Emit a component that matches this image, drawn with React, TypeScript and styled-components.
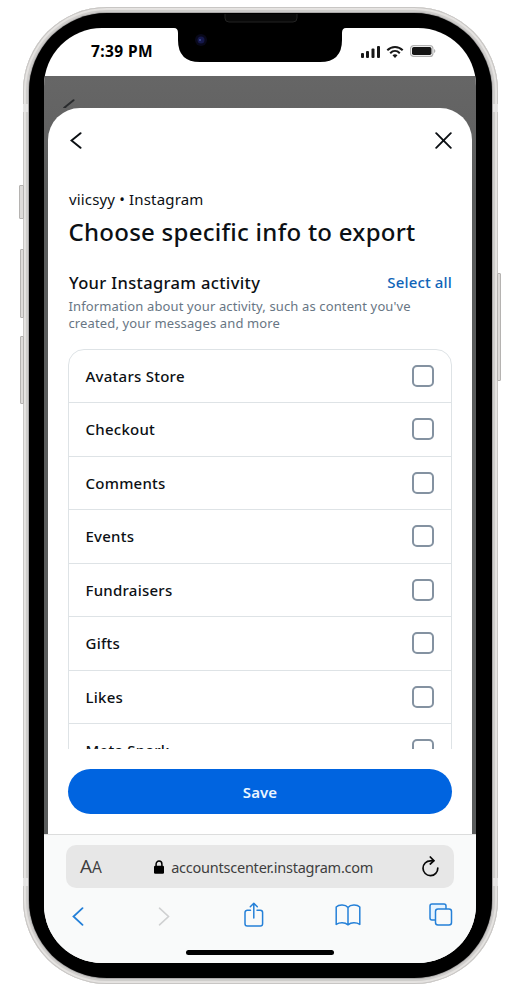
import React from "react";
import styled, { createGlobalStyle } from "styled-components";

const GlobalStyle = createGlobalStyle`
  * { box-sizing: border-box; }
  body { margin: 0; background: #fff; }
  button { border: 0; padding: 0; background: none; font: inherit; }
`;

const Page = styled.div`
  width: 526px;
  height: 995px;
  padding: 7px 0 0 23px;
  overflow: hidden;
  background: #fff;
  font-family: "Noto Sans", "Open Sans", sans-serif;
  color: #0c1014;
`;

const Phone = styled.div`
  position: relative;
  width: 475px;
  height: 977px;
  padding: 6px;
  border-radius: 84px;
  background: #dcdad9;
  box-shadow: inset 0 0 0 1px #c8c6c4, inset 0 0 1px 3px #e6e4e2, inset 0 0 1px 4px #cbc9c7;
`;

const SideButton = styled.i<{ $top: number; $height: number; $side: "left" | "right"; $out: number }>`
  position: absolute;
  top: ${(p) => p.$top}px;
  ${(p) => p.$side}: -${(p) => p.$out}px;
  width: ${(p) => p.$out + 1}px;
  height: ${(p) => p.$height}px;
  border: 1px solid #b5b3b1;
  border-radius: 1px;
  background: #dddbd9;
`;

const AntennaBand = styled.i<{ $top: number; $side: "left" | "right" }>`
  position: absolute;
  top: ${(p) => p.$top}px;
  ${(p) => p.$side}: 0;
  width: 5px;
  height: 8px;
  background: #e6e5e4;
`;

const Bezel = styled.div`
  width: 463px;
  height: 965px;
  padding: 15px;
  border-radius: 78px;
  background: #000;
  box-shadow: 0 0 2px #222;
`;

const Screen = styled.div`
  display: flex;
  flex-direction: column;
  width: 432px;
  height: 935px;
  border-radius: 58px;
  overflow: hidden;
  background: #fff;
`;

const StatusBar = styled.header`
  display: flex;
  justify-content: space-between;
  height: 48px;
  padding: 11px 40px 0 47px;
`;

const Clock = styled.time`
  font-size: 15.5px;
  line-height: 24px;
  font-weight: 700;
  letter-spacing: 0.4px;
  color: #000;
`;

const StatusIcons = styled.div`
  display: flex;
  align-items: center;
  gap: 6px;
  height: 24px;
`;

const Notch = styled.svg`
  position: absolute;
  left: 149px;
  top: 7px;
`;

const Backdrop = styled.main`
  display: flex;
  flex-direction: column;
  height: 758px;
  padding: 0 4px;
  background: linear-gradient(#666 0, #636363 40px, #5a5c5c 120px);
`;

const BackdropHead = styled.div`
  height: 32px;
  padding: 23px 0 0 15px;
  overflow: hidden;
  line-height: 0;
`;

const Sheet = styled.section`
  display: flex;
  flex-direction: column;
  height: 726px;
  padding: 0 20px;
  border-radius: 32px 32px 0 0;
  background: #fff;
`;

const SheetNav = styled.nav`
  display: flex;
  justify-content: space-between;
  align-items: center;
  height: 64px;
  padding-left: 2px;
`;

const IconButton = styled.button`
  display: flex;
`;

const Account = styled.p`
  margin: 17px 0 0 1px;
  font-size: 15px;
  line-height: 20px;
  letter-spacing: 0.16px;
`;

const Title = styled.h1`
  margin: 7px 0 0 0.5px;
  font-size: 24px;
  line-height: 32px;
  font-weight: 500;
  letter-spacing: 0.26px;
  white-space: nowrap;
`;

const SectionHead = styled.div`
  display: flex;
  justify-content: space-between;
  margin-top: 23px;
  height: 24px;
`;

const SectionTitle = styled.h2`
  margin: 0 0 0 1px;
  font-size: 16.5px;
  line-height: 24px;
  font-weight: 500;
  letter-spacing: 0.35px;
`;

const SelectAll = styled.button`
  font-size: 15px;
  line-height: 22px;
  height: 22px;
  font-weight: 500;
  letter-spacing: 0.15px;
  color: #0f64b8;
`;

const Description = styled.p`
  margin: 3px 0 0 0.5px;
  font-size: 13px;
  line-height: 17px;
  letter-spacing: 0.13px;
  color: #687684;
  white-space: nowrap;
`;

const ListViewport = styled.div`
  height: 400.5px;
  margin-top: 16.5px;
  overflow: hidden;
`;

const List = styled.ul`
  margin: 0;
  padding: 0;
  list-style: none;
  border: 1px solid #dee3e6;
  border-radius: 16px;
`;

const Row = styled.li`
  display: flex;
  align-items: center;
  justify-content: space-between;
  height: 53.5px;
  padding: 0 17px 0 16.5px;
  border-bottom: 1px solid #dee3e6;
  font-size: 15px;
  font-weight: 480;
  letter-spacing: 0.25px;
`;

const Checkbox = styled.span`
  width: 22px;
  height: 22px;
  border: 2px solid #8492a1;
  border-radius: 5px;
`;

const SaveButton = styled.button`
  flex: none;
  height: 45px;
  margin-top: 20px;
  border-radius: 23px;
  background: #0064e0;
  color: #e9f5ff;
  font-size: 15px;
  font-weight: 600;
  letter-spacing: 0.1px;
`;

const Browser = styled.footer`
  display: flex;
  flex-direction: column;
  align-items: center;
  height: 129px;
  padding: 10px 22px 0;
  border-top: 1px solid #dcdddd;
  background: #f9fafa;
`;

const AddressBar = styled.div`
  display: flex;
  align-items: center;
  justify-content: space-between;
  width: 388px;
  height: 43px;
  padding: 0 15px 0 14px;
  border-radius: 10px;
  background: #e7e7e7;
  color: #3e3e3e;
`;

const TextSize = styled.span`
  font-family: "Open Sans", "Noto Sans", sans-serif;
  font-size: 19px;
  line-height: 24px;
  small { font-size: 15.5px; }
`;

const Address = styled.span`
  display: flex;
  align-items: center;
  gap: 7.5px;
  padding-left: 3px;
  font-size: 14.5px;
  line-height: 20px;
  letter-spacing: -0.23px;
`;

const Toolbar = styled.div`
  display: grid;
  grid-template-columns: 86px 86px 91px 94px 24px;
  align-items: center;
  width: 388px;
  height: 54px;
  padding-left: 6px;
`;

const HistoryButton = styled.button`
  display: flex;
  padding-top: 3px;
`;

const HomeIndicator = styled.i`
  width: 148px;
  height: 5px;
  margin-top: 8px;
  border-radius: 3px;
  background: #000;
`;

const categories = ["Avatars Store", "Checkout", "Comments", "Events", "Fundraisers", "Gifts", "Likes", "Meta Spark"];

type ChevronProps = { color: string; right?: boolean; w?: number; h?: number; stroke?: number };

const Chevron = ({ color, right, w = 12, h = 18, stroke = 2 }: ChevronProps) => (
  <svg width={w} height={h} fill="none" stroke={color} strokeWidth={stroke} strokeLinecap="round">
    <path d={right ? `M1.5 1.2 ${w - 1.5} ${h / 2} 1.5 ${h - 1.2}` : `M${w - 1.5} 1.2 1.5 ${h / 2} ${w - 1.5} ${h - 1.2}`} />
  </svg>
);

const Signal = () => (
  <svg width="19" height="13" fill="#171717">
    <rect x="0" y="8" width="3" height="5" rx="1" />
    <rect x="5" y="6" width="3" height="7" rx="1" />
    <rect x="10.5" y="3.5" width="3" height="9.5" rx="1" />
    <rect x="16" y="1" width="3" height="12" rx="1" />
  </svg>
);

const Wifi = () => (
  <svg width="18" height="13" fill="none" stroke="#171717" strokeWidth="2">
    <path d="M1.3 5.2C5.7.8 12.3.8 16.7 5.2" />
    <path d="M4.2 8.2C7 5.4 11 5.4 13.8 8.2" />
    <path d="M6.5 10.3Q9 8.2 11.5 10.3L9 12.9Z" fill="#171717" stroke="none" />
  </svg>
);

const Battery = () => (
  <svg width="26" height="12">
    <rect x=".6" y=".6" width="22.3" height="10.8" rx="3" fill="#fff" stroke="#b2b2b2" strokeWidth="1.2" />
    <rect x="2" y="2" width="19.5" height="8" rx="1.8" fill="#151515" />
    <path d="M24 4v4q1.4-.6 1.4-2T24 4Z" fill="#b2b2b2" />
  </svg>
);

const Close = () => (
  <svg width="17" height="17" stroke="#0c1014" strokeWidth="1.9" strokeLinecap="round">
    <path d="m1.2 1.2 14.6 14.6M15.8 1.2 1.2 15.8" />
  </svg>
);

const Lock = () => (
  <svg width="10" height="14">
    <path d="M2.1 7V4a2.9 2.9 0 0 1 5.8 0v3" fill="none" stroke="#000" strokeWidth="1.5" />
    <rect y="5.7" width="10" height="8" rx="1.3" />
  </svg>
);

const Reload = () => (
  <svg width="17" height="21" fill="none" stroke="#080808" strokeWidth="1.7" strokeLinecap="round">
    <path d="M15.8 12A7.4 7.4 0 1 1 8.4 4.8H11.5" />
    <path d="m8.3 1 3.6 3.8-3.6 3.2" />
  </svg>
);

const Share = () => (
  <svg width="20" height="26" fill="none" stroke="#2580d8" strokeWidth="1.5" strokeLinecap="round" strokeLinejoin="round">
    <path d="M6.5 8.2H3.3A2.3 2.3 0 0 0 1 10.5v11.2A2.3 2.3 0 0 0 3.3 24h13a2.3 2.3 0 0 0 2.3-2.3V10.5a2.3 2.3 0 0 0-2.3-2.3H13" />
    <path d="M9.8 16V1.2M6.3 4.7l3.5-3.5 3.5 3.5" />
  </svg>
);

const Book = () => (
  <svg width="26" height="22" fill="none" stroke="#2580d8" strokeWidth="1.5" strokeLinejoin="round">
    <path d="M13 3.4C10.5.5 4 .3 1.2 3v17.4c3.5-2.2 8.5-2.2 11.8.4 3.3-2.6 8.3-2.6 11.8-.4V3C22 .3 15.5.5 13 3.4Zm0 0v17.4" />
  </svg>
);

const Tabs = () => (
  <svg width="24" height="24" stroke="#2580d8" strokeWidth="1.5">
    <rect x="1" y="1" width="16" height="16" rx="2" fill="#e5f3ff" />
    <rect x="6.5" y="6" width="16" height="16" rx="2.5" fill="#f9fafa" />
  </svg>
);

export default function App() {
  return (
    <Page>
      <GlobalStyle />
      <Phone>
        <SideButton $side="left" $top={178} $height={34} $out={4} />
        <SideButton $side="left" $top={242} $height={69} $out={3} />
        <SideButton $side="left" $top={329} $height={68} $out={3} />
        <SideButton $side="right" $top={266} $height={108} $out={3} />
        <AntennaBand $side="left" $top={97} />
        <AntennaBand $side="right" $top={97} />
        <AntennaBand $side="left" $top={871} />
        <AntennaBand $side="right" $top={871} />
        <Bezel>
          <Screen>
            <StatusBar>
              <Clock>7:39 PM</Clock>
              <StatusIcons>
                <Signal />
                <Wifi />
                <Battery />
              </StatusIcons>
            </StatusBar>
            <Backdrop>
              <BackdropHead>
                <Chevron color="#292b2d" w={12} h={17} />
              </BackdropHead>
              <Sheet>
                <SheetNav>
                  <IconButton aria-label="Back">
                    <Chevron color="#0c1014" w={12} h={17} />
                  </IconButton>
                  <IconButton aria-label="Close">
                    <Close />
                  </IconButton>
                </SheetNav>
                <Account>viicsyy • Instagram</Account>
                <Title>Choose specific info to export</Title>
                <SectionHead>
                  <SectionTitle>Your Instagram activity</SectionTitle>
                  <SelectAll>Select all</SelectAll>
                </SectionHead>
                <Description>
                  Information about your activity, such as content you've
                  <br />
                  created, your messages and more
                </Description>
                <ListViewport>
                  <List>
                    {categories.map((name) => (
                      <Row key={name}>
                        {name}
                        <Checkbox role="checkbox" aria-checked={false} aria-label={name} />
                      </Row>
                    ))}
                  </List>
                </ListViewport>
                <SaveButton>Save</SaveButton>
              </Sheet>
            </Backdrop>
            <Browser>
              <AddressBar>
                <TextSize>
                  A<small>A</small>
                </TextSize>
                <Address>
                  <Lock />
                  accountscenter.instagram.com
                </Address>
                <Reload />
              </AddressBar>
              <Toolbar>
                <HistoryButton aria-label="Previous page">
                  <Chevron color="#2580d8" w={12} h={19} stroke={1.8} />
                </HistoryButton>
                <HistoryButton aria-label="Next page">
                  <Chevron color="#cfd0d1" right w={12} h={19} stroke={1.6} />
                </HistoryButton>
                <Share />
                <Book />
                <Tabs />
              </Toolbar>
              <HomeIndicator />
            </Browser>
          </Screen>
        </Bezel>
        <Notch width="176" height="50">
          <path d="M0 8H176V14H174Q170 14 170 19V26Q170 48 148 48H28Q6 48 6 26V19Q6 14 2 14H0Z" fill="#000" />
          <path d="M53 0v4q0 4 4 4h64q4 0 4-4V0" fill="#090909" stroke="#222" />
          <circle cx="29" cy="26" r="6" fill="#08081a" />
          <circle cx="29" cy="26" r="3.5" fill="#15184b" />
          <circle cx="28" cy="26" r="1" fill="#3c498f" />
        </Notch>
      </Phone>
    </Page>
  );
}
